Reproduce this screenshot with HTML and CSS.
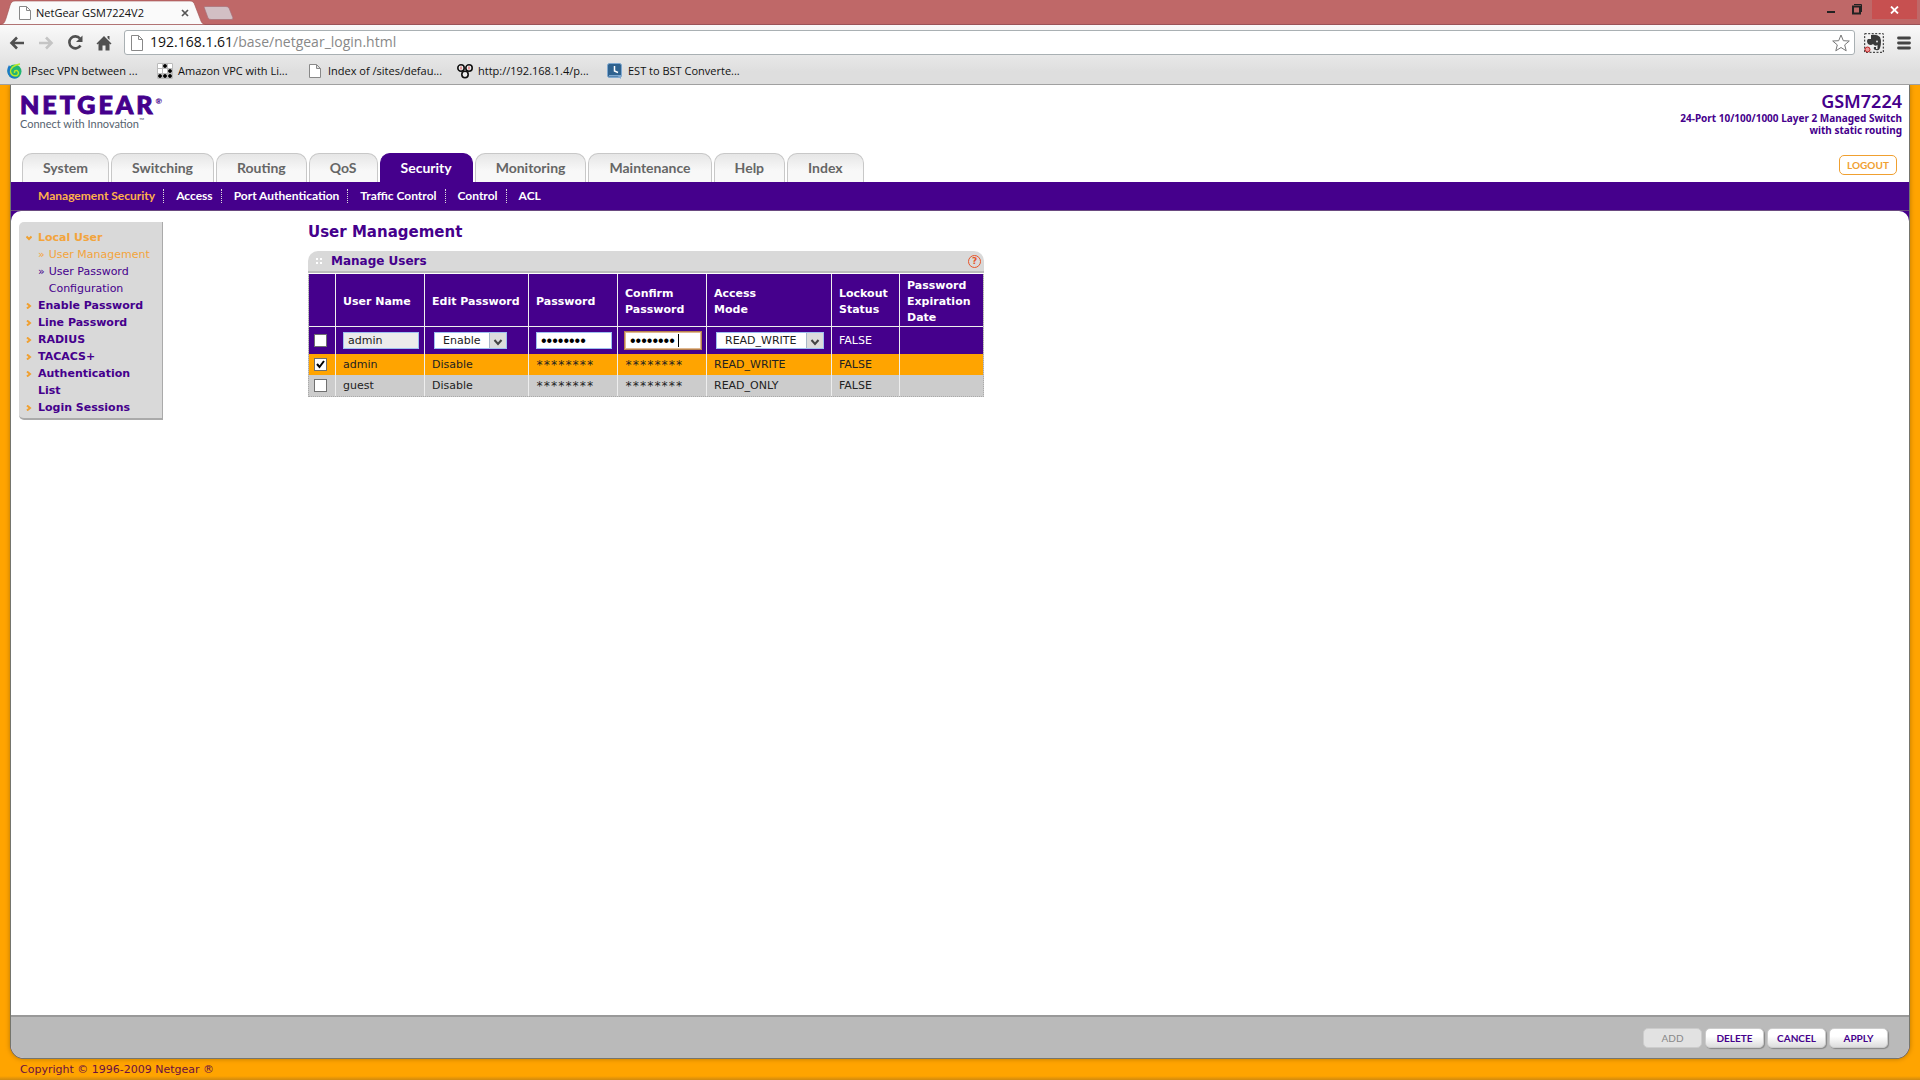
FILE: index.html
```html
<!DOCTYPE html>
<html lang="en">
<head>
<meta charset="utf-8">
<title>NetGear GSM7224V2</title>
<link rel="stylesheet" href="styles.css">
</head>
<body>
<div class="browser">
  <div class="titlebar">
    <div class="tab">
      <svg class="tab-shape" width="206" height="24" viewBox="0 0 206 24"><path d="M0 24C4 24 5 21 6 18L10 5C11 2 12 .5 15 .5H190C193 .5 194 2 195 5L200 18C201 21 202 24 206 24Z" fill="#fafafa" stroke="#a05050" stroke-width=".6"/></svg>
      <div class="tab-content">
        <svg width="12" height="14" viewBox="0 0 12 14"><path d="M.5 .5H7.500L11.500 4.500V13.500H.5ZM7.500 .5V4.500H11.500" fill="#fff" stroke="#888"/></svg>
        <span class="tab-title">NetGear GSM7224V2</span>
        <svg width="8" height="8" viewBox="0 0 8 8"><path d="M1 1L7 7M7 1L1 7" stroke="#555" stroke-width="1.700"/></svg>
      </div>
    </div>
    <svg class="new-tab" width="31" height="14" viewBox="0 0 31 14"><path d="M1 1Q1 .5 3 .5H23Q25 .5 26 2L30 12Q30 13.500 28 13.500H8Q6 13.500 5 12Z" fill="#d2bfc4" stroke="#a87078" stroke-width=".7"/></svg>
    <div class="window-buttons">
      <svg width="8" height="18" viewBox="0 0 8 18"><path d="M0 12H8" stroke="#222" stroke-width="2"/></svg>
      <svg width="11" height="18" viewBox="0 0 11 18"><path d="M1 6.500H8V13.500H1Z" fill="none" stroke="#222" stroke-width="2"/><path d="M2 4.500H9.500V12" fill="none" stroke="#222"/></svg>
      <div class="close"><svg width="9" height="8" viewBox="0 0 9 8"><path d="M1 .5L8 7.500M8 .5L1 7.500" stroke="#fff" stroke-width="1.800"/></svg></div>
    </div>
  </div>
  <div class="toolbar">
    <svg width="16" height="14" viewBox="0 0 16 14"><path d="M15 7H3M8 1.500L2.500 7L8 12.500" fill="none" stroke="#505050" stroke-width="2.600"/></svg>
    <svg width="16" height="14" viewBox="0 0 16 14"><path d="M1 7H13M8 1.500L13.500 7L8 12.500" fill="none" stroke="#c4c4c4" stroke-width="2.600"/></svg>
    <svg width="16" height="16" viewBox="0 0 16 16"><path d="M13 3.500A6 6 0 1 0 13.500 10.500" fill="none" stroke="#505050" stroke-width="2.600"/><path d="M15.500 .5V7H9Z" fill="#505050"/></svg>
    <svg width="16" height="16" viewBox="0 0 16 16"><path d="M8 1L15.500 8.500L14.500 9.500L13.500 8.500V15.500H9.500V10.500H6.500V15.500H2.500V8.500L1.500 9.500L.5 8.500ZM11.500 1H13.500V5L11.500 3Z" fill="#505050"/></svg>
    <div class="omnibox">
      <svg width="12" height="16" viewBox="0 0 12 16"><path d="M.5 .5H7.500L11.500 4.500V15.500H.5ZM7.500 .5V4.500H11.500" fill="#fff" stroke="#888"/></svg>
      <span class="url"><b>192.168.1.61</b>/base/netgear_login.html</span>
      <svg width="18" height="18" viewBox="0 0 18 18"><path d="M9 1L11.300 6.700L17.300 7L12.700 10.900L14.200 16.800L9 13.500L3.800 16.800L5.300 10.900L.7 7L6.700 6.700Z" fill="#fff" stroke="#777"/></svg>
    </div>
    <svg width="20" height="20" viewBox="0 0 20 20"><rect x=".7" y=".7" width="18.600" height="18.600" fill="none" stroke="#222" stroke-dasharray="2 1.500"/><path d="M7 2Q13 1 16 4Q18 9 16 15Q15 18 12 17Q9 17 10 14H12V16H13.500V12Q11 14 9 11Q7 13 4 11Q2 8 4 6H7Z" fill="#3a3a3a"/><circle cx="13" cy="8.500" r="1" fill="#ddd"/><circle cx="3.500" cy="16.500" r="2.500" fill="#e99" stroke="#b22"/></svg>
    <svg width="14" height="14" viewBox="0 0 14 14"><path d="M1.500 2H12.500M1.500 7H12.500M1.500 12H12.500" stroke="#444" stroke-width="2.800" stroke-linecap="round"/></svg>
  </div>
  <div class="bookmarks">
    <a href="#"><svg width="16" height="16" viewBox="0 0 16 16"><circle cx="7.500" cy="8.500" r="7" fill="#22b573"/><path d="M2 2Q-2 9 3 14Q8 17 12 14Q7 15 4 11Q2 7 6 4Q3 5 2 2Z" fill="#1b78c8"/><path d="M13 1Q3 3 3.500 9Q5 14 10 12.500Q13 10 10 7.500Q7 7 7.500 10" fill="none" stroke="#b7e82a" stroke-width="1.500"/></svg>IPsec VPN between ...</a>
    <a href="#"><svg width="16" height="16" viewBox="0 0 16 16"><path d="M0 0H16V16H0Z" fill="#fff"/><path d="M.5 .5H15.500V15.500H.5ZM5.500 .5V15.500M10.500 .5V15.500M.5 5.500H15.500M.5 10.500H15.500" fill="none" stroke="#bbb"/><g fill="#000"><circle cx="8" cy="3" r="2"/><circle cx="13" cy="8" r="2"/><circle cx="3" cy="13" r="2"/><circle cx="8" cy="13" r="2"/><circle cx="13" cy="13" r="2"/></g></svg>Amazon VPC with Li...</a>
    <a href="#"><svg width="16" height="14" viewBox="-2 0 16 14"><path d="M.5 .5H7.500L11.500 4.500V13.500H.5ZM7.500 .5V4.500H11.500" fill="#fff" stroke="#888"/></svg>Index of /sites/defau...</a>
    <a href="#"><svg width="16" height="16" viewBox="0 0 16 16"><g fill="#eee" stroke="#111" stroke-width="1.600"><circle cx="4" cy="5" r="3.200"/><circle cx="12" cy="5" r="3.200"/><circle cx="8" cy="11.500" r="3.200"/></g><path d="M4 3.500V6.500M12 3.500V6.500" stroke="#d44"/></svg>http://192.168.1.4/p...</a>
    <a href="#"><svg width="16" height="16" viewBox="0 0 16 16"><rect x=".5" y=".5" width="14" height="14" rx="2" fill="#2f628f" stroke="#7fa8d0"/><path d="M2 12H14V16L11 13.500H2Z" fill="#7fa8d0"/><path d="M7.500 3V8L11 9.500" fill="none" stroke="#fff" stroke-width="1.500"/></svg>EST to BST Converte...</a>
  </div>
</div>

<div class="frame">
  <header class="head">
    <div class="brand">
      <div class="logo">NETGEAR<sup>®</sup></div>
      <div class="tagline">Connect with Innovation<sup>™</sup></div>
    </div>
    <div class="model">
      <div class="model-name">GSM7224</div>
      <div>24-Port 10/100/1000 Layer 2 Managed Switch</div>
      <div>with static routing</div>
    </div>
    <nav class="tabs">
      <a href="#">System</a><a href="#">Switching</a><a href="#">Routing</a><a href="#">QoS</a><a href="#" class="active">Security</a><a href="#">Monitoring</a><a href="#">Maintenance</a><a href="#">Help</a><a href="#">Index</a>
    </nav>
    <button class="logout" type="button">LOGOUT</button>
  </header>
  <nav class="subnav">
    <a href="#" class="active">Management Security</a><a href="#">Access</a><a href="#">Port Authentication</a><a href="#">Traffic Control</a><a href="#">Control</a><a href="#">ACL</a>
  </nav>
  <div class="panel">
    <div class="content">
      <nav class="side">
        <ul>
          <li class="open"><svg width="6" height="6" viewBox="0 0 6 6"><path d="M.5 1.500L3 4L5.500 1.500" /></svg><a href="#">Local User</a></li>
          <li class="sub current"><span>»</span><a href="#">User Management</a></li>
          <li class="sub"><span>»</span><a href="#">User Password Configuration</a></li>
          <li><svg width="6" height="6" viewBox="0 0 6 6"><path d="M1 .5L4 3L1 5.500"/></svg><a href="#">Enable Password</a></li>
          <li><svg width="6" height="6" viewBox="0 0 6 6"><path d="M1 .5L4 3L1 5.500"/></svg><a href="#">Line Password</a></li>
          <li><svg width="6" height="6" viewBox="0 0 6 6"><path d="M1 .5L4 3L1 5.500"/></svg><a href="#">RADIUS</a></li>
          <li><svg width="6" height="6" viewBox="0 0 6 6"><path d="M1 .5L4 3L1 5.500"/></svg><a href="#">TACACS+</a></li>
          <li><svg width="6" height="6" viewBox="0 0 6 6"><path d="M1 .5L4 3L1 5.500"/></svg><a href="#">Authentication List</a></li>
          <li><svg width="6" height="6" viewBox="0 0 6 6"><path d="M1 .5L4 3L1 5.500"/></svg><a href="#">Login Sessions</a></li>
        </ul>
      </nav>
      <main class="main">
        <h1>User Management</h1>
        <section class="card">
          <div class="card-head">
            <svg width="7" height="7" viewBox="0 0 7 7"><path d="M0 0H2V2H0ZM4 0H6V2H4ZM0 4H2V6H0ZM4 4H6V6H4Z" fill="#fff"/></svg>
            <h2>Manage Users</h2>
            <button class="help" type="button" aria-label="Help">?</button>
          </div>
          <table>
            <colgroup><col class="c1"><col class="c2"><col class="c3"><col class="c4"><col class="c5"><col class="c6"><col class="c7"><col class="c8"></colgroup>
            <thead>
              <tr><th></th><th>User Name</th><th>Edit Password</th><th>Password</th><th>Confirm Password</th><th>Access<br>Mode</th><th>Lockout Status</th><th>Password Expiration Date</th></tr>
            </thead>
            <tbody>
              <tr class="edit">
                <td><input type="checkbox" aria-label="Select all"></td>
                <td><input class="field disabled" type="text" value="admin" aria-label="User Name"></td>
                <td><div class="select select-edit"><select aria-label="Edit Password"><option>Enable</option><option>Disable</option></select><svg width="17" height="15" viewBox="0 0 17 15"><rect width="17" height="15" fill="#dcdcdc"/><path d="M.5 0V15" stroke="#a9b8c9"/><path d="M5.500 7L9 11L12.500 7" fill="none" stroke="#444" stroke-width="2"/></svg></div></td>
                <td><input class="field" type="password" value="password" aria-label="Password"></td>
                <td><div class="focused"><input class="field" type="password" value="password" aria-label="Confirm Password"></div></td>
                <td><div class="select select-mode"><select aria-label="Access Mode"><option>READ_WRITE</option><option>READ_ONLY</option></select><svg width="17" height="15" viewBox="0 0 17 15"><rect width="17" height="15" fill="#dcdcdc"/><path d="M.5 0V15" stroke="#a9b8c9"/><path d="M5.500 7L9 11L12.500 7" fill="none" stroke="#444" stroke-width="2"/></svg></div></td>
                <td>FALSE</td><td></td>
              </tr>
              <tr class="selected">
                <td><input type="checkbox" checked aria-label="Select admin"></td>
                <td>admin</td><td>Disable</td><td class="mask">********</td><td class="mask">********</td><td>READ_WRITE</td><td>FALSE</td><td></td>
              </tr>
              <tr>
                <td><input type="checkbox" aria-label="Select guest"></td>
                <td>guest</td><td>Disable</td><td class="mask">********</td><td class="mask">********</td><td>READ_ONLY</td><td>FALSE</td><td></td>
              </tr>
            </tbody>
          </table>
        </section>
      </main>
    </div>
    <div class="actions">
      <button type="button" disabled>ADD</button>
      <button type="button">DELETE</button>
      <button type="button">CANCEL</button>
      <button type="button">APPLY</button>
    </div>
  </div>
</div>
<footer class="copyright">Copyright © 1996-2009 Netgear ®</footer>
</body>
</html>
```

FILE: styles.css
```css
* { box-sizing: border-box; }
body {
  margin: 0;
  min-height: 100vh;
  display: flex;
  flex-direction: column;
  background: #ffa400;
  font-family: "DejaVu Sans", sans-serif;
  font-size: 11px;
  color: #222;
}
a { color: inherit; text-decoration: none; }
svg { display: block; flex: none; }
button { font: inherit; padding: 0; }

/* Browser chrome */
.browser { position: relative; z-index: 1; font-family: "Open Sans", sans-serif; font-size: 11px; color: #111; border-bottom: 1px solid #a0a0a0; background: linear-gradient(#bf6868 24px, #fafafa 24px, #dedede 72px); }
.titlebar { display: flex; height: 25px; border-bottom: 1px solid #9a5358; }
.tab { display: grid; width: 206px; height: 25px; }
.tab-shape, .tab-content { grid-area: 1 / 1; }
.tab-shape { height: 25px; }
.tab-content { display: flex; align-items: center; gap: 5px; padding: 0 17px 0 19px; }
.tab-title { flex: 1; }
.new-tab { margin: 6px 0 0 -3px; }
.window-buttons { display: flex; gap: 17px; margin-left: auto; padding-right: 3px; }
.close { display: flex; align-items: center; justify-content: center; width: 45px; height: 19px; background: #c75050; margin-left: -8px; }
.toolbar { display: flex; align-items: center; gap: 13px; height: 35px; padding: 0 9px; }
.omnibox { flex: 1; display: flex; align-items: center; gap: 7px; height: 25px; padding: 0 4px 0 6px; margin: 0 -4px 0 -1px; border: 1px solid #a9b0b3; border-radius: 3px; background: #fff; }
.url { flex: 1; font-size: 14px; line-height: 20px; padding-bottom: 1px; color: #888; }
.url b { font-weight: 400; color: #111; }
.bookmarks { display: flex; align-items: center; height: 24px; padding: 0 7px 3px; }
.bookmarks a { display: flex; align-items: center; gap: 5px; width: 150px; white-space: nowrap; }

/* Page frame */
.frame { flex: 1; display: flex; flex-direction: column; margin: 0 10px; background: #45008c; border: solid #75756d; border-width: 0 1px 1px; border-radius: 0 0 14px 14px; box-shadow: 0 0 5px #b87600; overflow: hidden; }
.head { display: grid; grid-template-columns: 1fr auto; grid-template-rows: 68px 29px; background: #fff; }
.brand { padding: 7px 0 0 9px; }
.logo { font: 900 25px/25px Lato, sans-serif; letter-spacing: 3px; color: #45008c; -webkit-text-stroke: 1px #45008c; }
.logo sup { font-size: 8px; vertical-align: 10px; line-height: 0; letter-spacing: 0; -webkit-text-stroke: 0; }
.tagline { font: 11px/14px Lato, sans-serif; color: #56636f; }
.tagline sup { font-size: 7px; line-height: 0; }
.model { padding: 8px 7px 0 0; text-align: right; font: 700 10px/12px "Noto Sans", sans-serif; color: #45008c; }
.model-name { font-size: 18px; line-height: 17px; margin-bottom: 2px; font-weight: 600; }
.tabs { display: flex; gap: 2px; padding-left: 11px; font: 700 14px/28px Lato, sans-serif; color: #666; }
.tabs a { padding: 0 20px; height: 29px; border: 1px solid #c8c8c8; border-bottom: 0; border-radius: 10px 10px 0 0; background: linear-gradient(#e6e6e6, #f8f8f8 60%); }
.tabs .active { background: #45008c; border-color: #45008c; color: #fff; }
.logout { justify-self: end; width: 58px; height: 20px; margin-right: 12px; margin-top: 2px; border: 1px solid #f0a030; border-radius: 5px; background: #fff; color: #f0a030; font: 700 10px/18px Lato, sans-serif; }
.subnav { display: flex; align-items: center; height: 29px; padding-left: 27px; font: 700 12px/14px Lato, sans-serif; color: #fff; border-bottom: 1px solid #6a4a80; }
.subnav a + a { margin-left: 8px; padding-left: 12px; border-left: 1px dotted #ddd; }
.subnav .active { color: #ffb04a; }
.panel { flex: 1; display: flex; flex-direction: column; background: #fff; border-radius: 10px 10px 0 0; }
.content { flex: 1; display: flex; align-items: flex-start; padding: 11px 8px; }

/* Side menu */
.side { width: 144px; margin-right: 145px; padding: 7px 0 2px 7px; background: #d9d9d9; border: solid #aaa; border-width: 0 1px 2px 0; border-radius: 5px 0 0 5px; }
.side ul { list-style: none; margin: 0; padding: 0; line-height: 17px; font-weight: 700; color: #45008c; }
.side li { display: flex; gap: 6px; padding-right: 12px; }
.side li svg { margin-top: 6px; fill: none; stroke: #f0a030; stroke-width: 2; }
.side .open, .side .current { color: #f3a43c; }
.side .sub { padding: 0 6px 0 12px; gap: 4px; font-weight: 400; }

/* Main table */
h1 { margin: 0 0 9px; font-size: 15px; line-height: 20px; color: #45008c; }
h2 { flex: 1; margin: 0; font-size: 12px; line-height: 20px; color: #45008c; }
.card { width: 676px; }
.card-head { display: flex; align-items: center; gap: 8px; height: 22px; padding: 0 3px 0 8px; margin-bottom: 1px; background: #d9d9d9; border-bottom: 2px solid #bcbcbc; border-radius: 10px 10px 0 0; }
.help { width: 13px; height: 13px; border: 1px solid #e8552a; border-radius: 50%; background: none; color: #e8552a; font: 700 9px/11px "DejaVu Sans", sans-serif; }
table { width: 100%; table-layout: fixed; border-collapse: separate; border-spacing: 0; border: 1px dotted #aaa; border-top: 0; background: #ccc; }
.c1 { width: 27px; } .c2, .c4, .c5 { width: 89px; } .c3 { width: 104px; } .c6 { width: 125px; } .c7 { width: 68px; } .c8 { width: 83px; }
th, td { height: 21px; padding: 0 0 0 7px; text-align: left; border-right: 1px solid #eee; }
th:last-child, td:last-child { border-right: 0; }
th:first-child, td:first-child { padding-left: 5px; }
th { height: 53px; padding-top: 3px; line-height: 16px; color: #fff; background: #45008c; border-bottom: 1px solid #eee; }
.edit td { height: 27px; background: #45008c; color: #fff; }
.selected td { background: #ffa400; }
.mask { font: 12px/14px "DejaVu Sans Mono", monospace; }
input[type="checkbox"] { appearance: none; display: block; width: 13px; height: 13px; margin: 0; border: 1px solid #707070; background: #fff; }
input[type="checkbox"]:checked { background: #fff url("data:image/svg+xml,%3Csvg xmlns='http://www.w3.org/2000/svg' viewBox='0 0 11 11'%3E%3Cpath d='M2 5L4.500 8L9 2' fill='none' stroke='%23000' stroke-width='2'/%3E%3C/svg%3E"); }
.field { display: block; width: 76px; height: 17px; padding: 0 4px; border: 1px solid #9dc0f0; background: #fff; font: 11px "DejaVu Sans", sans-serif; color: #222; }
.field[type="password"] { font: 16px/15px "Liberation Sans", sans-serif; color: #000; }
.disabled { background: #ebebeb; }
.focused { position: relative; width: 78px; margin-left: -1px; border: 1px solid #b8814e; }
.focused .field { border-color: #e0b890; }
.focused::after { content: ""; position: absolute; left: 53px; top: 2px; width: 1px; height: 13px; background: #000; }
.select { display: grid; width: 73px; height: 17px; margin-left: 2px; }
.select select { grid-area: 1 / 1; appearance: none; padding: 0 0 0 8px; border: 1px solid #9dc0f0; border-radius: 0; background: #fff; color: #222; font: 11px "DejaVu Sans", sans-serif; }
.select svg { grid-area: 1 / 1; justify-self: end; margin: 1px; pointer-events: none; }
.select-mode { width: 108px; }

/* Page footer */
.actions { display: flex; justify-content: flex-end; gap: 3px; height: 43px; padding: 11px 21px 0 0; background: #bababa; border-top: 2px solid #999; }
.actions button { width: 59px; height: 20px; border: 1px solid #ccc; border-radius: 5px; background: linear-gradient(#fff 40%, #ddd); box-shadow: 1px 1px 1px #888; color: #45008c; font: 700 10px/18px Lato, sans-serif; }
.actions button:disabled { color: #888; font-weight: 400; background: #e2e2e2; box-shadow: none; }
.copyright { height: 21px; padding-left: 20px; font-size: 11px; line-height: 22px; color: #6a1040; background: linear-gradient(transparent 17px, #d08a10); }
```
